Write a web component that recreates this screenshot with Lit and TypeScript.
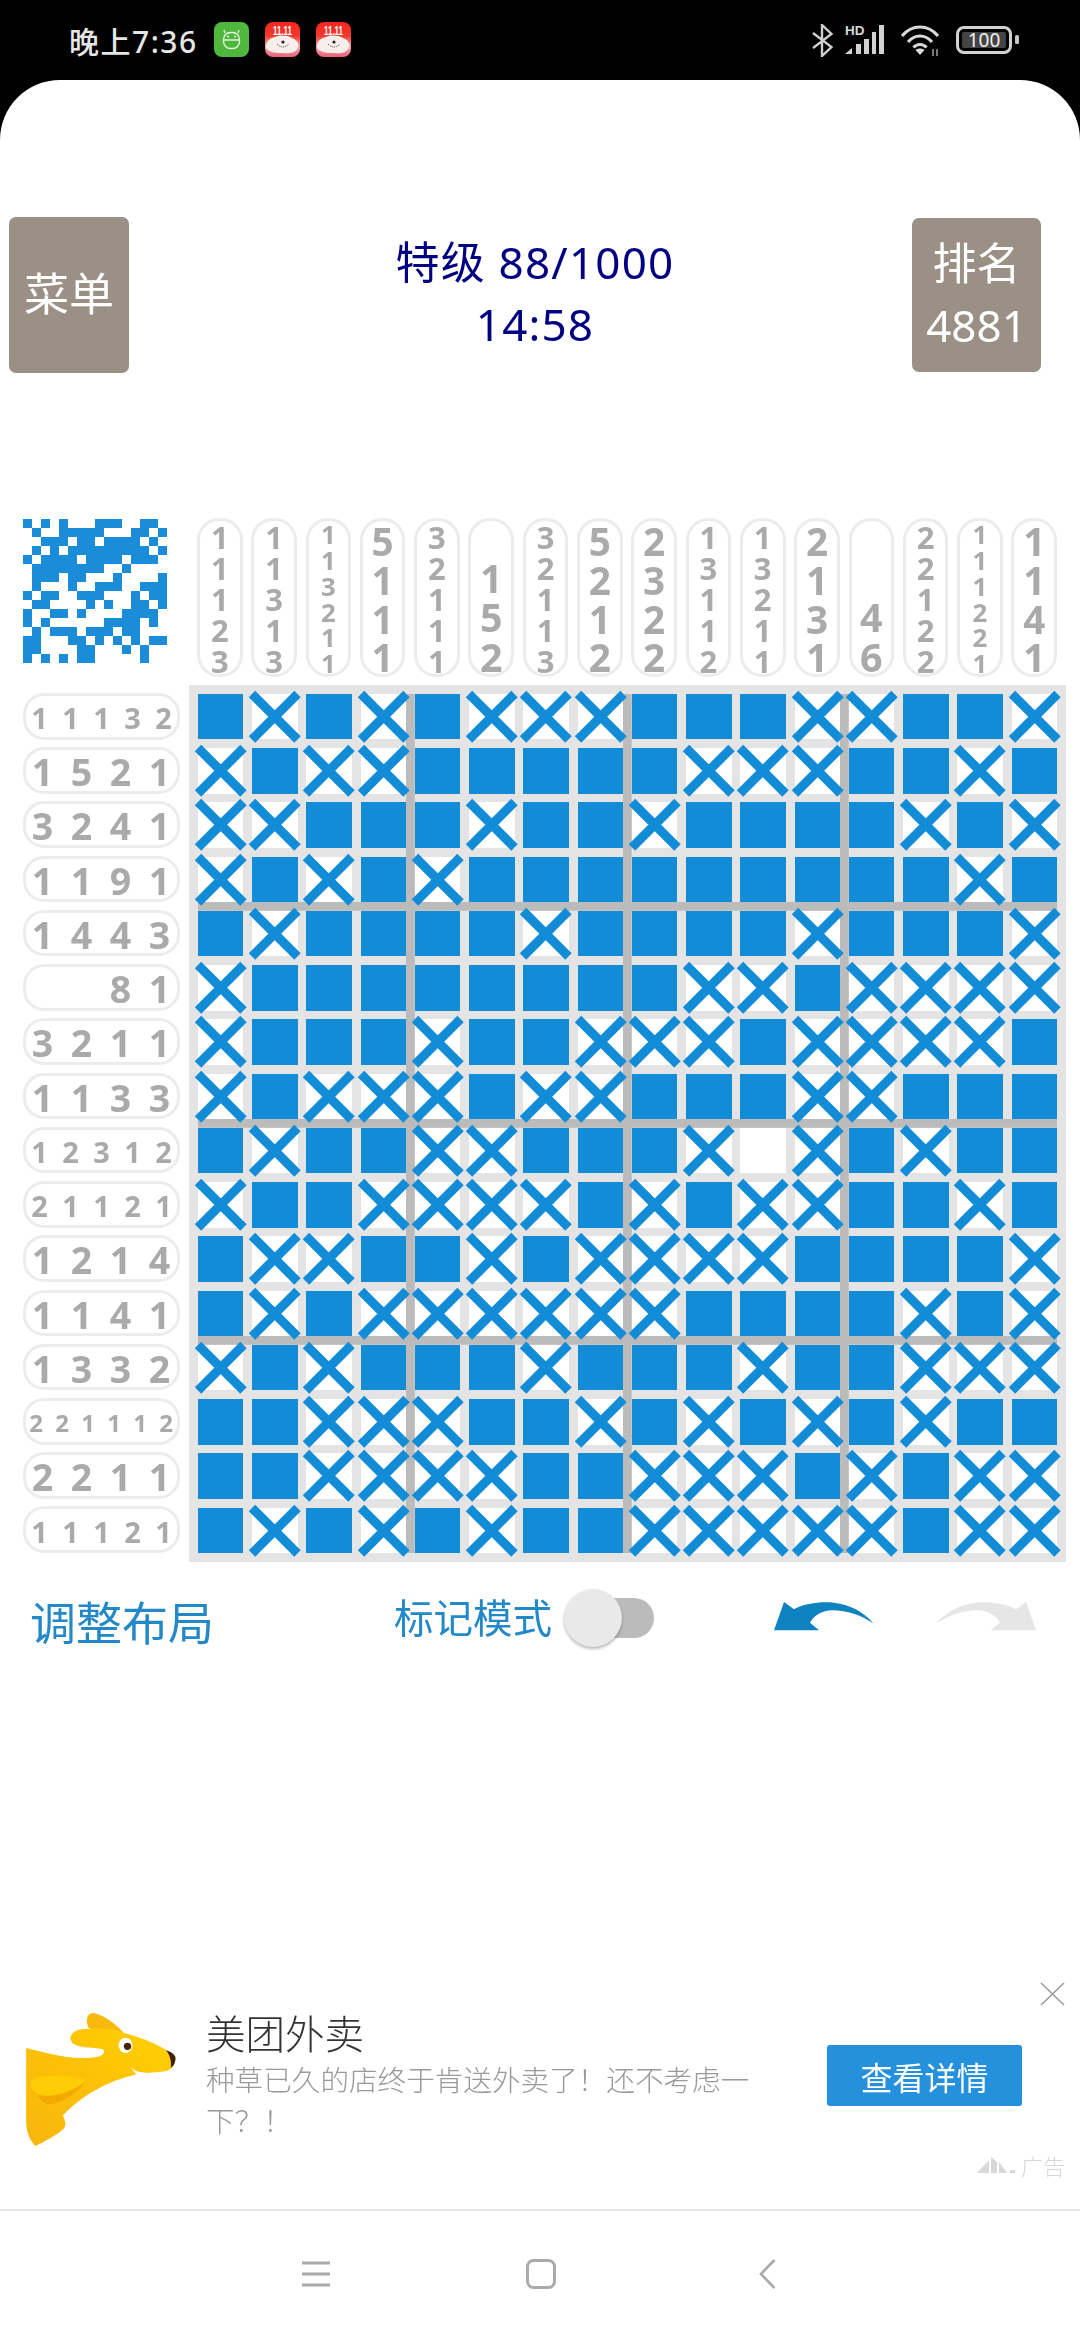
import { LitElement, html, css } from "lit";
import { customElement } from "lit/decorators.js";

const BOARD = [
  "BXBXBXXXBBBXXBBX",
  "XBXXBBBBBXXXBBXB",
  "XXBBBXBBXBBBBXBX",
  "XBXBXBBBBBBBBBXB",
  "BXBBBBXBBBBXBBBX",
  "XBBBBBBBBXXBXXXX",
  "XBBBXBBXXXBXXXXB",
  "XBXXXBXXBBBXXBBB",
  "BXBBXXBBBX_XBXBB",
  "XBBXXXXBXBXXBBXB",
  "BXXBBXBXXXXBBBBX",
  "BXBXXXXXXBBBBXBX",
  "XBXBBBXBBBXBBXXX",
  "BBXXXBBXBXBXBXBB",
  "BBXXXXBBXXXBXBXX",
  "BXBXBXBBXXXXXBXX",
];
const ROWS = ["11132","1521","3241","1191","1443","81","3211","1133","12312","21121","1214","1141","1332","221112","2211","11121"];
const COLS = ["11123","11313","113211","5111","32111","152","32113","5212","2322","13112","13211","2131","46","22122","111221","1141"];

const colSize = (n: number) => Math.min(39.5, 155 / n);
const rowSize = (n: number) => (n <= 4 ? 37.5 : n === 5 ? 29 : 24);
const rowPitch = (n: number) => (n <= 4 ? 39 : n === 5 ? 31 : 26);

const redIcon = () => html`<svg class="notif" viewBox="0 0 35 35">
  <defs><linearGradient id="jd" x1="0" y1="0" x2="0" y2="1"><stop offset="0" stop-color="#f5261c"/><stop offset=".4" stop-color="#f03a2e"/><stop offset=".7" stop-color="#f6a9b0"/><stop offset="1" stop-color="#ea5f78"/></linearGradient></defs>
  <rect width="35" height="35" rx="8" fill="url(#jd)"/>
  <text x="17.5" y="12.500" text-anchor="middle" font-family="Liberation Sans" font-weight="700" font-size="12" textLength="19" lengthAdjust="spacingAndGlyphs" fill="#fff">11.11</text>
  <path d="M1 25C1 18 6 16 10 15C15 13 22 13 27 16C32 18 34 21 33 25C32 30 26 32 18 31C10 31 2 30 1 25Z" fill="#f8efec"/>
  <circle cx="18" cy="20" r="1.6" fill="#222"/><path d="M12 22Q18 28 24 22" fill="none" stroke="#333" stroke-width=".9" stroke-dasharray="1.2 1"/>
</svg>`;

@customElement("app-root")
export class AppRoot extends LitElement {
  static styles = css`
    :host { display: block; width: 1080px; height: 2340px; background: #000; overflow: hidden; font-family: "Noto Sans", "Noto Sans CJK SC", sans-serif; }
    .status { height: 80px; display: flex; align-items: center; padding: 0 61px 0 69px; box-sizing: border-box; color: #e6e6e6; }
    .time { font-size: 30px; font-weight: 500; width: 128px; white-space: nowrap; letter-spacing: 1.500px; margin-top: -1px; }
    .notif { width: 35px; height: 35px; margin-right: 16px; display: block; margin-top: -1px; }
    .notif.first { margin-left: 17px; }
    .st-right { margin-left: auto; display: flex; align-items: center; }
    .st-right svg { display: block; }
    .page { height: 2260px; background: #fff; border-radius: 60px 60px 0 0; display: flex; flex-direction: column; will-change: transform; }
    .header { display: flex; align-items: flex-start; padding: 137px 39px 0 9px; }
    .btn { background: #9a9086; color: #fff; border-radius: 7px; display: flex; flex-direction: column; align-items: center; justify-content: center; box-sizing: border-box; padding-bottom: 2px; font-size: 44px; line-height: 62px; font-weight: 400; font-family: "Noto Sans", "Noto Sans CJK SC", sans-serif; }
    .btn.menu { width: 120px; height: 156px; font-size: 45px; }
    .btn.rank { width: 129px; height: 154px; margin-top: 1px; }
    .title { flex: 1; color: #000080; display: flex; flex-direction: column; align-items: center; padding: 14px 0 0 29px; font-size: 44px; line-height: 62px; font-weight: 400; letter-spacing: 1.200px; font-family: "Noto Sans", "Noto Sans CJK SC", sans-serif; }
    .game { display: grid; grid-template-columns: 157px 877px; grid-template-rows: 159px 877px; column-gap: 9px; row-gap: 8px; padding: 145px 0 0 23px; }
    .preview { display: grid; grid-template-columns: repeat(16, 9px); grid-auto-rows: 9px; width: 144px; height: 144px; margin-top: 1px; }
    .preview i { display: block; }
    .preview i.on { background: #1a8cd8; }
    .cols { display: grid; grid-template-columns: repeat(16, 1fr); column-gap: 8.73px; padding: 0 9px 0 8px; }
    .cpill { border: 3px solid #ececec; border-radius: 22px; display: flex; flex-direction: column; justify-content: flex-end; align-items: center; box-sizing: border-box; overflow: hidden; color: #aaa; font-weight: 700; line-height: 1; }
    .cpill span { display: block; flex: none; }
    .cpill span:last-child { margin-bottom: -3px; }
    .rows { display: grid; grid-template-columns: minmax(0, 1fr); grid-template-rows: repeat(16, 1fr); row-gap: 7.7px; padding: 8px 0 9px; }
    .rpill { border: 3px solid #ececec; border-radius: 21px; display: flex; justify-content: flex-end; align-items: center; box-sizing: border-box; color: #aaa; font-weight: 700; line-height: 1; padding-top: 3px; min-width: 0; }
    .rpill span { display: block; text-align: center; flex: none; }
    .rpill span:last-child { margin-right: -2px; }
    .board { background: #e4e4e4; padding: 9px; box-sizing: border-box; }
    .inner { width: 859px; height: 859px; display: grid; grid-template-columns: repeat(16, 1fr); grid-template-rows: repeat(16, 1fr); gap: 8.75px;
      background-color: #e4e4e4;
      background-image: linear-gradient(#bbb,#bbb), linear-gradient(#bbb,#bbb), linear-gradient(#bbb,#bbb), linear-gradient(#bbb,#bbb), linear-gradient(#bbb,#bbb), linear-gradient(#bbb,#bbb);
      background-repeat: no-repeat;
      background-size: 8.75px 100%, 8.75px 100%, 8.75px 100%, 100% 8.75px, 100% 8.75px, 100% 8.75px;
      background-position: 208.3px 0, 425.3px 0, 642.2px 0, 0 208.2px, 0 425.2px, 0 642.2px; }
    .cell { min-width: 0; min-height: 0; }
    .cell.B { background: #128cd7; }
    .cell.X, .cell._ { background: #fff; }
    .cell svg { width: 100%; height: 100%; display: block; overflow: visible; }
    .controls { display: flex; align-items: center; height: 76px; margin-top: 18px; }
    .adjust { font-size: 46px; color: #2288c8; margin: 4px 0 0 30px; width: 180px; white-space: nowrap; line-height: 60px; font-family: "Noto Sans CJK SC", sans-serif; font-weight: 400; }
    .mark { font-size: 39.5px; color: #2288c8; margin: -4px 0 0 184px; width: 158px; white-space: nowrap; line-height: 50px; font-family: "Noto Sans CJK SC", sans-serif; font-weight: 400; }
    .toggle { position: relative; width: 90px; height: 58px; margin-left: 12px; display: flex; align-items: center; justify-content: flex-end; }
    .track { width: 60px; height: 40px; background: #bbb; border-radius: 0 20px 20px 0; }
    .thumb { position: absolute; left: 0; top: 0; width: 58px; height: 58px; border-radius: 50%; background: #e9e9e9; box-shadow: 0 2px 3px rgba(0,0,0,.28); }
    .undo { margin-left: 120px; width: 100px; height: 30px; display: block; margin-top: -5px; }
    .redo { margin-left: 62px; width: 100px; height: 30px; display: block; margin-top: -5px; }
    .spacer { flex: 1; }
    .ad { position: relative; height: 231px; border-bottom: 2px solid #e6e6e6; box-sizing: border-box; display: flex; align-items: flex-start; padding: 0 58px 0 25px; }
    .logo { width: 152px; height: 135px; margin-top: 32px; flex: none; display: block; }
    .ad-text { width: 555px; margin-left: 29px; flex: none; font-family: "Noto Sans CJK SC", sans-serif; font-weight: 300; }
    .ad-title { font-size: 39.5px; line-height: 50px; margin-top: 27px; color: #333; white-space: nowrap; }
    .ad-desc { font-size: 28.6px; line-height: 41px; color: #999; margin-top: 1px; }
    .ad-btn { margin: 65px 0 0 auto; width: 195px; height: 61px; background: #2590db; color: #fff; border-radius: 3px; display: flex; align-items: center; justify-content: center; font-size: 32px; font-family: "Noto Sans CJK SC", sans-serif; font-weight: 400; }
    .close { position: absolute; right: 15px; top: 2px; width: 25px; height: 24px; }
    .tag { position: absolute; right: 15px; top: 170px; display: flex; align-items: center; color: #d8d8d8; font-size: 22px; line-height: 30px; font-family: "Noto Sans CJK SC", sans-serif; font-weight: 300; }
    .tag svg { width: 41px; height: 18px; margin-right: 3px; display: block; }
    .nav { height: 129px; display: flex; align-items: center; padding-bottom: 3px; box-sizing: border-box; }
    .nav svg { display: block; }
    .nav .a { margin-left: 302px; width: 28px; height: 26px; }
    .nav .b { margin-left: 196px; width: 30px; height: 30px; }
    .nav .c { margin-left: 203px; width: 17px; height: 30px; }
  `;

  private x() {
    return html`<svg viewBox="0 0 46 46"><path d="M0 0L46 46M46 0L0 46" stroke="#128cd7" stroke-width="9.2" fill="none"/></svg>`;
  }

  render() {
    const flat = BOARD.join("").split("");
    return html`
      <div class="status">
        <div class="time">晚上7:36</div>
        <svg class="notif first" viewBox="0 0 35 35">
          <rect width="35" height="35" rx="8" fill="#4fb83c"/>
          <path d="M11 11L10 8M24 11L25 8" stroke="#dff3da" stroke-width="1.4"/>
          <rect x="9.5" y="10.5" width="16" height="16" rx="7" fill="none" stroke="#e8f7e4" stroke-width="1.4"/>
          <path d="M9.5 18H25.5" stroke="#e8f7e4" stroke-width="1.4"/>
          <circle cx="14" cy="14.5" r="1" fill="#e8f7e4"/><circle cx="21" cy="14.5" r="1" fill="#e8f7e4"/>
        </svg>
        ${redIcon()}
        ${redIcon()}
        <div class="st-right">
          <svg width="21" height="33" viewBox="0 0 21 33" style="margin-right:12px"><path d="M1 9L19.5 23L10 32V1L19.5 10L1 24" fill="none" stroke="#cfcfcf" stroke-width="2.4"/></svg>
          <svg width="40" height="30" viewBox="0 0 40 30" style="margin-right:15px;margin-top:-3px">
            <text x="0" y="10.500" font-family="Liberation Sans" font-weight="700" font-size="13.500" fill="#d8d8d8">HD</text>
            <path d="M0 30L7 24V30ZM11 20H16V30H11ZM19 15H24V30H19ZM27 8H31V30H27ZM34 1H39V30H34Z" fill="#d2d2d2"/>
          </svg>
          <svg width="40" height="31" viewBox="0 0 40 31" style="margin-right:16px">
            <path d="M2 11C12 -1 28 -1 38 11M8 17C15 9 25 9 32 17M13.5 22.5C17 18.5 23 18.5 26.5 22.5" fill="none" stroke="#d8d8d8" stroke-width="3.2"/>
            <path d="M20 30L15.5 25C18 23 22 23 24.500 25Z" fill="#d8d8d8"/>
            <path d="M33 24V31M37 24V31" stroke="#777" stroke-width="2"/>
          </svg>
          <svg width="63" height="28" viewBox="0 0 63 28">
            <rect x="1.500" y="1.500" width="53" height="25" rx="6.500" fill="none" stroke="#d2d2d2" stroke-width="3"/>
            <rect x="6" y="6" width="44" height="16" rx="2" fill="#444"/>
            <text x="28" y="20.500" text-anchor="middle" font-family="Noto Sans" font-size="19" fill="#f0f0f0">100</text>
            <rect x="59" y="9" width="4" height="9" rx="1.500" fill="#c8c8c8"/>
          </svg>
        </div>
      </div>
      <div class="page">
        <div class="header">
          <div class="btn menu">菜单</div>
          <div class="title"><div>特级 88/1000</div><div>14:58</div></div>
          <div class="btn rank"><div>排名</div><div>4881</div></div>
        </div>
        <div class="game">
          <div class="preview">${flat.map((c) => html`<i class=${c === "B" ? "on" : ""}></i>`)}</div>
          <div class="cols">
            ${COLS.map((s) => html`<div class="cpill" style="font-size:${colSize(s.length)}px">${s.split("").map((d) => html`<span>${d}</span>`)}</div>`)}
          </div>
          <div class="rows">
            ${ROWS.map((s) => html`<div class="rpill" style="font-size:${rowSize(s.length)}px">${s.split("").map((d) => html`<span style="width:${rowPitch(s.length)}px">${d}</span>`)}</div>`)}
          </div>
          <div class="board">
            <div class="inner">
              ${flat.map((c) => html`<div class="cell ${c}">${c === "X" ? this.x() : ""}</div>`)}
            </div>
          </div>
        </div>
        <div class="controls">
          <div class="adjust">调整布局</div>
          <div class="mark">标记模式</div>
          <div class="toggle"><div class="track"></div><div class="thumb"></div></div>
          <svg class="undo" viewBox="70 58 300 88"><path d="M100 60L130 82C165 62 215 58 250 62C300 68 340 90 368 124C330 100 290 85 245 85C215 85 190 100 178 122L205 145L70 145Z" fill="#0f82c0"/></svg>
          <svg class="redo" viewBox="70 58 300 88"><path transform="translate(440 0) scale(-1 1)" d="M100 60L130 82C165 62 215 58 250 62C300 68 340 90 368 124C330 100 290 85 245 85C215 85 190 100 178 122L205 145L70 145Z" fill="#e6e6e6"/></svg>
        </div>
        <div class="spacer"></div>
        <div class="ad">
          <svg class="logo" viewBox="45 35 455 405">
            <defs>
              <linearGradient id="kg" x1="0" y1="1" x2="1" y2="0"><stop offset="0" stop-color="#f8b50c"/><stop offset=".6" stop-color="#fdc406"/><stop offset="1" stop-color="#ffd200"/></linearGradient>
            </defs>
            <path d="M235 82C225 60 230 38 250 38C285 45 320 75 340 97L300 110Z" fill="#f9b80e"/>
            <path d="M48 143C100 155 170 178 240 172C275 172 285 160 280 148C270 140 210 145 190 130C170 115 185 90 215 87C260 82 310 85 340 97C390 110 440 130 470 150L496 170C495 195 485 205 470 212C440 218 410 215 380 222C300 240 220 280 158 345C165 360 170 375 160 385C140 405 100 425 75 437C55 415 48 390 48 360Z" fill="url(#kg)"/>
            <path d="M352 190C365 208 385 218 412 216L380 224Z" fill="#fff"/>
            <path d="M82 285C130 290 190 275 230 240C200 280 160 305 120 312C100 312 90 300 82 285Z" fill="#f2a900"/>
            <path d="M62 245C70 225 160 215 230 240C190 275 130 290 100 285C75 282 60 265 62 245Z" fill="#ffcd05"/>
            <ellipse cx="346" cy="135" rx="21" ry="23" fill="#fff"/>
            <circle cx="352" cy="138" r="11" fill="#4a2508"/>
            <path d="M468 150C485 155 497 165 496 175C495 190 488 198 482 202C484 185 480 165 468 150Z" fill="#3e2108"/>
          </svg>
          <div class="ad-text">
            <div class="ad-title">美团外卖</div>
            <div class="ad-desc">种草已久的店终于肯送外卖了！还不考虑一下？！</div>
          </div>
          <div class="ad-btn">查看详情</div>
          <svg class="close" viewBox="0 0 25 24"><path d="M1 1L24 23M24 1L1 23" stroke="#9a9a9a" stroke-width="1.6" fill="none"/></svg>
          <div class="tag">
            <svg viewBox="0 0 41 18"><path d="M0 17L12 4V17ZM14 1L20 6V17H14ZM22 6L30 17H22ZM33 14H38V17H33Z" fill="#d8d8d8"/></svg>
            广告
          </div>
        </div>
        <div class="nav">
          <svg class="a" viewBox="0 0 28 26"><path d="M0 2H28M0 13H28M0 24H28" stroke="#aaa" stroke-width="3"/></svg>
          <svg class="b" viewBox="0 0 30 30"><rect x="1.500" y="1.500" width="27" height="27" rx="6" fill="none" stroke="#aaa" stroke-width="3"/></svg>
          <svg class="c" viewBox="0 0 17 30"><path d="M15.500 1L2 15L15.500 29" fill="none" stroke="#aaa" stroke-width="2.600"/></svg>
        </div>
      </div>
    `;
  }
}
